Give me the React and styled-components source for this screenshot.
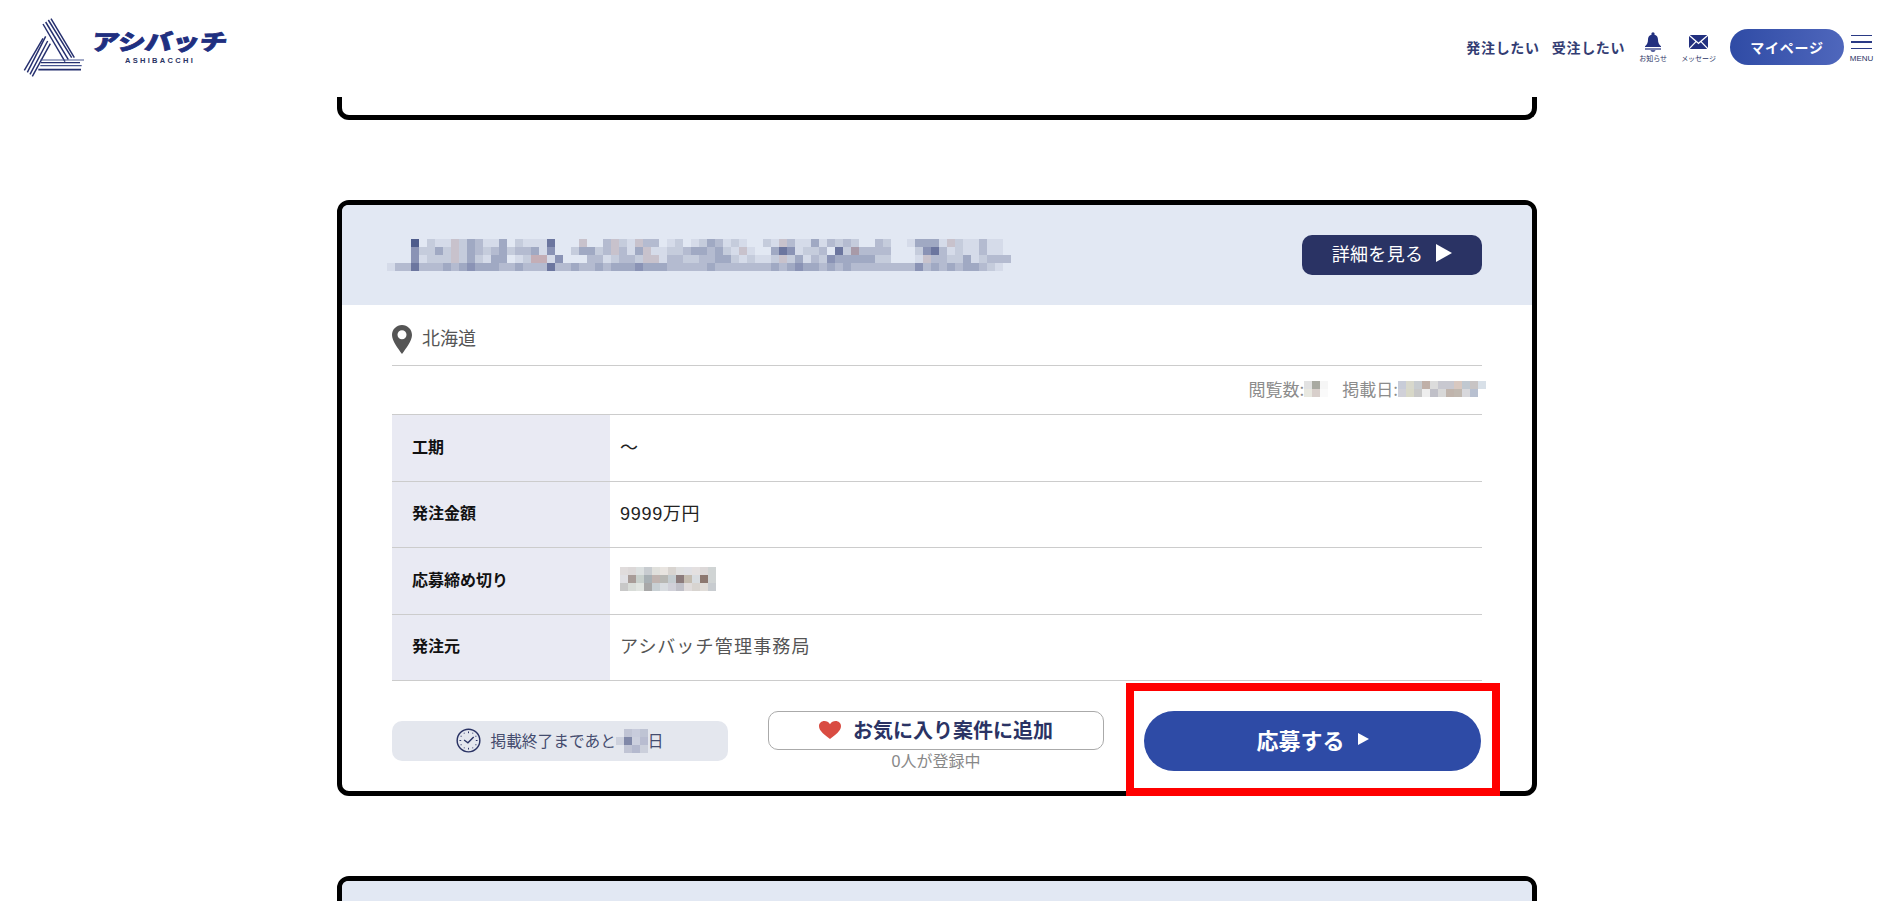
import React from "react";
import styled, { createGlobalStyle } from "styled-components";

const CJK = `"Noto Sans CJK JP", "Noto Sans", sans-serif`;
const LATIN = `"Liberation Sans", "Noto Sans CJK JP", sans-serif`;
const NAVY = "#2a3364";

const Global = createGlobalStyle`
  html, body { margin: 0; padding: 0; background: #fff; }
  body { font-family: ${LATIN}; color: #333; }
`;

const Page = styled.div`
  height: 901px;
  overflow: hidden;
  background: #fff;
`;

const Header = styled.header`
  height: 97px;
  box-sizing: border-box;
  padding: 0 11px 3px 15px;
  display: flex;
  align-items: center;
  justify-content: space-between;
`;

const LogoWrap = styled.div`
  display: flex;
  align-items: flex-start;
  gap: 3px;
  height: 68px;
`;

const LogoText = styled.div`
  display: flex;
  flex-direction: column;
  align-items: center;
  width: 134px;
  padding-top: 15px;
`;

const LogoKana = styled.div`
  font-family: ${CJK};
  font-weight: 900;
  font-size: 27.5px;
  line-height: 24px;
  height: 24px;
  color: #1f2f80;
  white-space: nowrap;
  -webkit-text-stroke: 1px #1f2f80;
  transform: skewX(-8deg) scale(1, 0.8);
`;

const LogoLatin = styled.div`
  font-family: ${LATIN};
  font-weight: 700;
  font-size: 7.5px;
  line-height: 10px;
  letter-spacing: 2.3px;
  margin-top: 4px;
  color: ${NAVY};
`;

const Nav = styled.nav`
  display: flex;
  align-items: center;
  gap: 14px;
`;

const TextLinks = styled.div`
  display: flex;
  gap: 12px;
`;

const TextLink = styled.a`
  font-family: ${CJK};
  font-weight: 700;
  font-size: 14px;
  letter-spacing: 0.7px;
  color: #333d73;
  white-space: nowrap;
`;

const IconLink = styled.a`
  display: flex;
  flex-direction: column;
  align-items: center;
  color: ${NAVY};
`;

const IconBox = styled.span`
  height: 20px;
  display: flex;
  align-items: center;
  justify-content: center;
  color: #22307f;
`;

const IconLabel = styled.span`
  font-family: ${CJK};
  font-size: 7px;
  line-height: 10px;
  margin-top: 1px;
  white-space: nowrap;
`;

const MyPage = styled.a`
  width: 114px;
  height: 36px;
  border-radius: 18px;
  background: linear-gradient(90deg, #2f4ba5, #4f67bc);
  color: #fff;
  font-family: ${CJK};
  font-weight: 700;
  font-size: 14px;
  letter-spacing: 0.8px;
  display: flex;
  align-items: center;
  justify-content: center;
`;

const Menu = styled.div`
  display: flex;
  flex-direction: column;
  align-items: center;
  width: 23px;
  margin-left: -8px;
  padding-top: 4px;
`;

const MenuLine = styled.span`
  display: block;
  width: 21px;
  height: 1.5px;
  background: #2a3a85;
  margin-bottom: 5px;
`;

const MenuLabel = styled.span`
  font-family: ${LATIN};
  font-size: 8px;
  line-height: 9px;
  color: ${NAVY};
`;

const Main = styled.main`
  width: 1200px;
  margin-left: 337px;
  display: flex;
  flex-direction: column;
  gap: 80px;
`;

const Card = styled.section`
  position: relative;
  flex: none;
  box-sizing: border-box;
  border: 5px solid #000;
  border-radius: 12px;
  background: #fff;
`;

const CardStub = styled(Card)`
  height: 23px;
  border-top: none;
  border-radius: 0 0 12px 12px;
`;

const CardHead = styled.div`
  height: 100px;
  box-sizing: border-box;
  padding: 0 50px 0 45px;
  display: flex;
  align-items: center;
  justify-content: space-between;
  background: #e2e8f3;
  border-radius: 6px 6px 0 0;
`;

const DetailButton = styled.a`
  width: 180px;
  height: 40px;
  box-sizing: border-box;
  padding-bottom: 5px;
  border-radius: 10px;
  background: ${NAVY};
  color: #fff;
  font-family: ${CJK};
  font-size: 18px;
  letter-spacing: 0.3px;
  display: flex;
  align-items: center;
  justify-content: center;
  gap: 13px;
`;

const Arrow = styled.span`
  flex: none;
  width: 0;
  height: 0;
  border-style: solid;
  border-color: transparent transparent transparent #fff;
  border-width: ${(p) => p.$h / 2}px 0 ${(p) => p.$h / 2}px ${(p) => p.$w}px;
`;

const CardBody = styled.div`
  padding: 0 50px;
`;

const Location = styled.div`
  height: 61px;
  box-sizing: border-box;
  padding-top: 9px;
  display: flex;
  align-items: center;
  gap: 10px;
  border-bottom: 1px solid #ccc;
  font-family: ${CJK};
  font-size: 18px;
  color: #555;
`;

const LocationName = styled.span`
  margin-bottom: 5px;
`;

const Meta = styled.div`
  height: 49px;
  box-sizing: border-box;
  padding-bottom: 3px;
  display: flex;
  align-items: center;
  justify-content: flex-end;
  border-bottom: 1px solid #ccc;
  font-family: ${CJK};
  font-size: 17px;
  color: #8c8c8c;
`;

const MetaItem = styled.div`
  display: flex;
  align-items: center;
  margin-left: ${(p) => p.$left || 0}px;
  margin-right: ${(p) => p.$right || 0}px;
`;

const Row = styled.div`
  height: 66.5px;
  box-sizing: border-box;
  display: grid;
  grid-template-columns: 218px 1fr;
  border-bottom: 1px solid #ccc;
`;

const RowLabel = styled.div`
  background: #e9eaf3;
  padding: 0 0 4px 20px;
  display: flex;
  align-items: center;
  font-family: ${CJK};
  font-weight: 700;
  font-size: 16px;
  color: #111;
`;

const RowValue = styled.div`
  padding: 0 0 4px 10px;
  display: flex;
  align-items: center;
  font-family: ${LATIN};
  font-size: 18px;
  letter-spacing: ${(p) => p.$spacing || 0.7}px;
  color: ${(p) => p.$color || "#222"};
`;

const Actions = styled.div`
  height: 110px;
  box-sizing: border-box;
  padding-top: 30px;
  display: grid;
  grid-template-columns: 336px 336px 337px;
  gap: 40px;
  align-items: start;
`;

const RemainPill = styled.div`
  height: 40px;
  box-sizing: border-box;
  padding: 0 0 1px 0;
  margin-top: 10px;
  border-radius: 10px;
  background: #e4e7ee;
  display: flex;
  align-items: center;
  justify-content: center;
  gap: 9px;
  font-family: ${CJK};
  font-size: 15.7px;
  color: #444c6e;
`;

const RemainText = styled.span`
  display: flex;
  align-items: center;
`;

const FavColumn = styled.div`
  display: flex;
  flex-direction: column;
  align-items: stretch;
`;

const FavButton = styled.a`
  height: 39px;
  box-sizing: border-box;
  padding-bottom: 2px;
  border: 1px solid #aaa;
  border-radius: 10px;
  background: #fff;
  display: flex;
  align-items: center;
  justify-content: center;
  gap: 12px;
  font-family: ${CJK};
  font-weight: 700;
  font-size: 20px;
  color: ${NAVY};
`;

const FavCount = styled.div`
  text-align: center;
  font-family: ${LATIN};
  font-size: 16px;
  line-height: 24px;
  color: #888;
`;

const ApplyButton = styled.a`
  height: 60px;
  box-sizing: border-box;
  padding-bottom: 4px;
  border-radius: 30px;
  background: #2e4ba6;
  color: #fff;
  font-family: ${CJK};
  font-weight: 700;
  font-size: 22px;
  display: flex;
  align-items: center;
  justify-content: center;
  gap: 13px;
`;

const Highlight = styled.div`
  position: absolute;
  left: 784px;
  top: 478px;
  width: 374px;
  height: 113px;
  box-sizing: border-box;
  border: 8px solid #f00;
`;

const MosaicSvg = styled.svg`
  display: block;
  flex: none;
  shape-rendering: crispEdges;
`;

function Mosaic({ rows, cell = 8 }) {
  const cols = Math.max(...rows.map((r) => r.length));
  return (
    <MosaicSvg width={cols * cell} height={rows.length * cell} viewBox={`0 0 ${cols * cell} ${rows.length * cell}`}>
      {rows.map((r, y) =>
        r.map((c, x) =>
          c ? <rect key={`${x}-${y}`} x={x * cell} y={y * cell} width={cell} height={cell} fill={c} /> : null
        )
      )}
    </MosaicSvg>
  );
}

const PAL = {
  a: "#d5dbe9",
  b: "#c5ccdc",
  c: "#b4bbd0",
  d: "#a0a9c3",
  e: "#8a93b5",
  f: "#6c769f",
  g: "#4e5c8c",
  h: "#c8c2cc",
  p: "#c4aeb6",
  q: "#a89aa8",
};
const decode = (s) => s.split("").map((ch) => PAL[ch] || null);

const TITLE = [
  "...g.baahbdcaad.baaaf...h..chbahcc.ab.abdcaba..bahcaadacbcb..cb..adddahbaacaa.",
  "...ebbdbhbdcbcdbccdae..bddbchcadhaabbcddcdbaha..dfeabbc.fbqcccc...befcabaacaa.",
  "...eabbbhbdbadd.abppae...ccabccbhhaccbbccddbabaabhbdacbedddddbb...ahccbbdabccc.",
  "accfcccdcdedddccdcccfccdccdcdddedddcccccdcccccccdcdeddcdcdccccccccecdcdcddcba.",
].map(decode);

const VIEWS = [
  ["#e2e2e2", "#a9aaa2", "#f6f6f6"],
  ["#e8e8e0", "#d8cfcb", "#fafafa"],
];
const POSTED = [
  ["#c8ccd8", "#d8d8cc", "#c8ccd0", "#c0b0a8", "#dcdcdc", "#c8c8d0", "#c8c8d0", "#d8c8c0", "#c0c8d0", "#c8c4c4", "#d8e0e8"],
  ["#d0d0d8", "#d8d8c8", "#c8c8c8", "#eeeeee", "#c0c0c8", "#d8d8d8", "#c0b4ac", "#c0b8b0", "#d8d8dc", "#b8c0d0", "#ffffff"],
];
const DEADLINE = [
  ["#e0dcdc", "#dcd8d8", "#dce0e0", "#c8ccd0", "#e0e0dc", "#e8e4e0", "#d8d4d0", "#e0e0e0", "#e0e0e4", "#e4e0e0", "#dcd8d8", "#d0d4d4"],
  ["#e0e0e4", "#a89c98", "#c8d0cc", "#a8b0b4", "#c0b4b0", "#b8b8b4", "#c4ccd0", "#8c7c7c", "#c4bcb0", "#d8dce0", "#8c7870", "#d0d4d4"],
  ["#c8c8c8", "#d8dcd8", "#e0e4e0", "#a8a8a8", "#c8d0d4", "#d8dce0", "#d0d0d8", "#c0c0c8", "#e0dcdc", "#d8d4d0", "#e0dcd8", "#c8ccd0"],
];
const DAYS = [
  [null, "#c0c4d4", "#c8ccdc", "#bfc4d4"],
  ["#cdd1dd", "#8088a8", "#ccd0de", "#b8bcd0"],
  [null, "#c0c4d4", "#b4b9ce", "#cbcfdb"],
];

function LogoMark() {
  const lines = [
    [84, 33, 150, 146],
    [92, 27, 160, 140],
    [100, 21, 170, 134],
    [108, 17, 178, 134],
    [28, 172, 84, 76],
    [37, 178, 92, 70],
    [45, 184, 98, 84],
    [52, 190, 106, 92],
  ];
  const bars = [
    [76, 141, 207, 3.5],
    [78, 149, 195, 4],
    [76, 158, 200, 3.5],
    [70, 170, 198, 5],
  ];
  return (
    <svg width="75" height="68" viewBox="0 0 225 204">
      {lines.map((l, i) => (
        <line key={i} x1={l[0]} y1={l[1]} x2={l[2]} y2={l[3]} stroke="#252f6e" strokeWidth="4.4" />
      ))}
      {bars.map((b, i) => (
        <line key={i} x1={b[0]} y1={b[1]} x2={b[2]} y2={b[1]} stroke={i % 2 ? "#252f6e" : "#46548f"} strokeWidth={b[3]} />
      ))}
    </svg>
  );
}

function Bell() {
  return (
    <svg width="18" height="20" viewBox="0 0 18 20" fill="currentColor">
      <circle cx="9" cy="1.8" r="1.6" />
      <path d="M9 2.4c-3.4 0-5 2.4-5 5.4 0 3-1 5-3 6.4v.8h16v-.8c-2-1.4-3-3.4-3-6.4 0-3-1.6-5.4-5-5.4z" />
      <rect x="1" y="16.4" width="16" height="1.2" />
      <path d="M6.5 18.2h5c-.4 1-1.4 1.6-2.5 1.6s-2.1-.6-2.5-1.6z" />
    </svg>
  );
}

function Mail() {
  return (
    <svg width="19" height="14" viewBox="0 0 19 14" fill="currentColor">
      <path d="M0.8 0h17.4L9.5 7.6z" />
      <path d="M0 1v12l6.3-6.6z" />
      <path d="M19 1v12l-6.3-6.6z" />
      <path d="M7.2 7.2l2.3 2 2.3-2L18.2 14H0.8z" />
    </svg>
  );
}

function Pin() {
  return (
    <svg width="20" height="29" viewBox="0 0 20 29" style={{ flex: "none" }}>
      <path
        fillRule="evenodd"
        fill="#555"
        d="M10 0C4.5 0 0 4.4 0 9.9c0 5.8 6.2 13.6 10 19.1 3.8-5.5 10-13.3 10-19.1C20 4.4 15.5 0 10 0zm0 14.2a4.5 4.5 0 1 1 0-9 4.5 4.5 0 0 1 0 9z"
      />
    </svg>
  );
}

function Clock() {
  const ticks = Array.from({ length: 12 }, (_, i) => i * 30);
  return (
    <svg width="25" height="25" viewBox="0 0 26 26" style={{ flex: "none" }}>
      <circle cx="13" cy="13" r="11.8" fill="none" stroke={NAVY} strokeWidth="1.5" />
      {ticks.map((a) => (
        <line key={a} x1="13" y1="3.6" x2="13" y2={a % 90 === 0 ? "5.4" : "4.6"} stroke={NAVY} strokeWidth="1" transform={`rotate(${a} 13 13)`} />
      ))}
      <path d="M8.4 12.4L12.4 15.4L18.4 9.4" fill="none" stroke={NAVY} strokeWidth="1.4" />
    </svg>
  );
}

function Heart() {
  return (
    <svg width="22" height="18" viewBox="0 0 22 18" style={{ flex: "none" }}>
      <path fill="#d94c42" d="M11 18C6 14 0 10 0 5.2 0 2.2 2.4 0 5.4 0 7.6 0 9.8 1.2 11 3.2 12.2 1.2 14.4 0 16.6 0 19.6 0 22 2.2 22 5.2 22 10 16 14 11 18z" />
    </svg>
  );
}

export default function App() {
  return (
    <Page>
      <Global />
      <Header>
        <LogoWrap>
          <LogoMark />
          <LogoText>
            <LogoKana>アシバッチ</LogoKana>
            <LogoLatin>ASHIBACCHI</LogoLatin>
          </LogoText>
        </LogoWrap>
        <Nav>
          <TextLinks>
            <TextLink>発注したい</TextLink>
            <TextLink>受注したい</TextLink>
          </TextLinks>
          <IconLink>
            <IconBox><Bell /></IconBox>
            <IconLabel>お知らせ</IconLabel>
          </IconLink>
          <IconLink>
            <IconBox><Mail /></IconBox>
            <IconLabel>メッセージ</IconLabel>
          </IconLink>
          <MyPage>マイページ</MyPage>
          <Menu>
            <MenuLine />
            <MenuLine />
            <MenuLine />
            <MenuLabel>MENU</MenuLabel>
          </Menu>
        </Nav>
      </Header>
      <Main>
        <CardStub />
        <Card>
          <CardHead>
            <Mosaic rows={TITLE} />
            <DetailButton>
              詳細を見る
              <Arrow $w={16} $h={18} />
            </DetailButton>
          </CardHead>
          <CardBody>
            <Location>
              <Pin />
              <LocationName>北海道</LocationName>
            </Location>
            <Meta>
              <MetaItem>
                閲覧数:
                <Mosaic rows={VIEWS} />
              </MetaItem>
              <MetaItem $left={14} $right={-4}>
                掲載日:
                <Mosaic rows={POSTED} />
              </MetaItem>
            </Meta>
            <Row>
              <RowLabel>工期</RowLabel>
              <RowValue>〜</RowValue>
            </Row>
            <Row>
              <RowLabel>発注金額</RowLabel>
              <RowValue>9999万円</RowValue>
            </Row>
            <Row>
              <RowLabel>応募締め切り</RowLabel>
              <RowValue><Mosaic rows={DEADLINE} /></RowValue>
            </Row>
            <Row>
              <RowLabel>発注元</RowLabel>
              <RowValue $color="#555" $spacing={1.2}>アシバッチ管理事務局</RowValue>
            </Row>
            <Actions>
              <RemainPill>
                <Clock />
                <RemainText>
                  掲載終了まであと
                  <Mosaic rows={DAYS} />
                  日
                </RemainText>
              </RemainPill>
              <FavColumn>
                <FavButton>
                  <Heart />
                  お気に入り案件に追加
                </FavButton>
                <FavCount>0人が登録中</FavCount>
              </FavColumn>
              <ApplyButton>
                応募する
                <Arrow $w={11} $h={12} />
              </ApplyButton>
            </Actions>
          </CardBody>
          <Highlight />
        </Card>
        <Card>
          <CardHead />
        </Card>
      </Main>
    </Page>
  );
}
